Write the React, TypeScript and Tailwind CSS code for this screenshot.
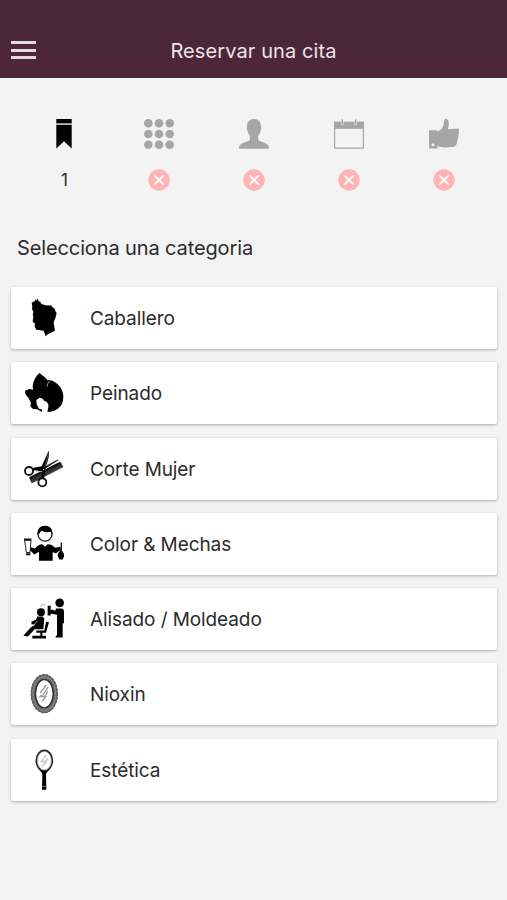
import { useState, type ReactNode } from 'react'

interface Category {
  id: string
  label: string
  viewBox: string
  icon: ReactNode
}

interface Step {
  id: string
  icon: ReactNode
}

const STEPS: Step[] = [
  {
    id: 'categoria',
    icon: (
      <g fill="#000">
        <path d="M7.3 0h15.4v4.4H7.3z" />
        <path d="M7.3 5.8h15.4v23.7L15 22.3l-7.7 7.2z" />
      </g>
    ),
  },
  {
    id: 'servicio',
    icon: (
      <g fill="#a6a6a6">
        {[4.3, 15, 25.7].map((y) => [4.3, 15, 25.7].map((x) => <circle key={`${x}-${y}`} cx={x} cy={y} r="4.3" />))}
      </g>
    ),
  },
  {
    id: 'profesional',
    icon: (
      <path
        fill="#a6a6a6"
        d="M15 0c4.4 0 7 2.8 7 7.4 0 1 .3 1.4.2 2.7-.2 1.5-.8 2-1.2 3.2-.5 1.8-1 2.7-1.9 3.7v3c0 1.4 1.4 2 4.4 3 4 1.3 6.500 2.700 6.500 6.700H0c0-4 2.500-5.400 6.500-6.700 3-1 4.400-1.600 4.400-3v-3C10 16 9.500 15.100 9 13.300c-.4-1.200-1-1.700-1.200-3.200-.1-1.300.2-1.700.2-2.700C8 2.800 10.600 0 15 0z"
      />
    ),
  },
  {
    id: 'fecha',
    icon: (
      <>
        <path d="M.6 9v20.200h28.800V9" fill="none" stroke="#a6a6a6" strokeWidth="1.200" />
        <path d="M0 2.600h30v7.200H0z" fill="#a6a6a6" />
        <path d="M8.300 2.500v2.500M21.700 2.500v2.500" stroke="#e6e6e6" strokeWidth="2.600" strokeLinecap="round" />
        <path d="M8.300.7v4M21.700.7v4" stroke="#a6a6a6" strokeWidth="1.400" strokeLinecap="round" />
      </>
    ),
  },
  {
    id: 'confirmar',
    icon: (
      <>
        <path
          fill="#a6a6a6"
          d="M0 11.300h7.700l1.300 1c3-1.500 5-3.500 5.500-6.300.3-2 .4-5.500 2-6 2-.5 3.500 2 3.300 5-.1 2-.6 3.500-.8 5.200l10.300-.6c1 0 1.200 1.200.6 3.400l-.7 5-.9 4-.9 3.400c-1 1.800-2.300 2.500-4.400 2.700-5 .6-9.500.5-14.500-.9v2.300H0z"
        />
        <circle cx="4" cy="25.700" r="1.500" fill="#f3f3f3" />
      </>
    ),
  },
]

const CATEGORIES: Category[] = [
  {
    id: 'caballero',
    label: 'Caballero',
    viewBox: '36 18 126 132',
    icon: (
      <path d="M82 25l5 10 4-1 1 6c8 5 16 7 24 6l5 1 3-3 1 6c6 3 12 7 11 14l4 5-4 16c-2 4-4 8-5 14l4 23-9 5-12 5-7 7-6-17-22-3-5-9 1-9-7-6 2-16-2-4 2-9-4-10 1-6-2-11 6-5 1 3 5-9 3 4z" />
    ),
  },
  {
    id: 'peinado',
    label: 'Peinado',
    viewBox: '36 19 126 132',
    icon: (
      <>
        <path d="M88 25c7 5 20 15 24 21 16-1 30 9 39 22 8 11 11 25 8 39-3 20-21 35-46 35-2-7 4-13 2-22-2-7-7-11-13-12l-4-6-9-3-10 7 1 12 7 14 10 3-2 7-13-8-13-1-8-8 2-10-7-14-10-13-1-10 14-5 10 2-1-12c2-16 10-29 20-38z" />
        <path d="M120 50l-6 5-3 11" fill="none" stroke="#bbb" strokeWidth="2.500" />
      </>
    ),
  },
  {
    id: 'corte-mujer',
    label: 'Corte Mujer',
    viewBox: '36 20 126 132',
    icon: (
      <>
        <path d="M57 112l95-47 8 14-95 50z" fill="#333" />
        <path d="M60 113l90-45" stroke="#111" strokeWidth="6" fill="none" />
        <path d="M68 125l90-46" stroke="#444" strokeWidth="5" strokeDasharray="3 1.500" fill="none" />
        <path d="M76 93l66-36 5 3-54 34z" fill="#222" stroke="#fff" strokeWidth="2" />
        <path d="M116 31c3 12-2 31-9 49l-5 34-9 1 4-24-29-1-2-7 29-5z" />
        <path d="M115 38l-9 38" stroke="#888" strokeWidth="2" />
        <circle cx="57" cy="92" r="12" fill="#fff" stroke="#111" strokeWidth="5.500" />
        <circle cx="97" cy="126" r="12" fill="#fff" stroke="#111" strokeWidth="5.500" />
        <circle cx="101" cy="88" r="2" fill="#fff" />
      </>
    ),
  },
  {
    id: 'color-mechas',
    label: 'Color & Mechas',
    viewBox: '36 20.5 126 132',
    icon: (
      <>
        <circle cx="105" cy="57" r="21" fill="#fff" stroke="#111" strokeWidth="4" />
        <path d="M83 57c-2-15 8-25 22-25s24 10 22 25l-5-7c-11 2-20 1-28-3-2 4-5 6-6 9z" />
        <path d="M58 95l17 5c6-8 13-13 22-13l8 8 8-8c9 0 16 3 22 11l16-3 2 8-15 11-10-3v26H87v-27l-14 8-16-16z" />
        <path d="M44 75h19l-3 37H49z" fill="#fff" stroke="#222" strokeWidth="3" />
        <path d="M42 73h22M48 117h13" stroke="#111" strokeWidth="6" />
        <path d="M154 82v24" stroke="#111" strokeWidth="4" />
        <path d="M153 102c5 7 10 13 10 20l-5 11h-10l-5-11c0-7 5-13 10-20z" />
      </>
    ),
  },
  {
    id: 'alisado-moldeado',
    label: 'Alisado / Moldeado',
    viewBox: '36 21.5 126 132',
    icon: (
      <>
        <circle cx="149" cy="39" r="13" />
        <path d="M138 56h16c5 0 8 4 8 9v35h-4v43h-21v-4l4-3V75l-22-4-1-8 18-1z" />
        <path d="M113 48h9v29h-9zM119 60h12v8h-12z" />
        <path d="M91 51c2-7 9-9 15-4" stroke="#777" strokeWidth="2" fill="none" />
        <circle cx="93" cy="67" r="12" />
        <path d="M82 80h16l5 6-3 32H74l-20 22-14-2 22-25 15-9-12-1-1-7 14-6z" />
        <path d="M83 93l-9 9" stroke="#fff" strokeWidth="2" />
        <path d="M108 96l-5 26H79v7h12v9H67v8h41v-8h-11v-9h11l9-32z" />
      </>
    ),
  },
  {
    id: 'nioxin',
    label: 'Nioxin',
    viewBox: '36 22 126 132',
    icon: (
      <>
        <ellipse cx="103" cy="87" rx="34" ry="52" fill="#fff" stroke="#707070" strokeWidth="13" />
        <ellipse cx="103" cy="87" rx="39" ry="57" fill="none" stroke="#555" strokeWidth="4" strokeDasharray="7 4" />
        <ellipse cx="103" cy="87" rx="34" ry="51" fill="none" stroke="#999" strokeWidth="3" strokeDasharray="4 4" />
        <ellipse cx="103" cy="87" rx="27" ry="43" fill="#fff" stroke="#333" strokeWidth="5" />
        <path d="M109 60L91 85M115 66l-19 30h11l-11 15M94 91l-6 8M113 79l-9 21" stroke="#999" strokeWidth="4" fill="none" />
      </>
    ),
  },
  {
    id: 'estetica',
    label: 'Estética',
    viewBox: '36 38 126 132',
    icon: (
      <>
        <ellipse cx="103" cy="76" rx="24" ry="31" fill="#fff" stroke="#222" strokeWidth="5" />
        <ellipse cx="103" cy="76" rx="21" ry="28" fill="none" stroke="#888" strokeWidth="2" />
        <path d="M109 58L94 78h13l-11 17M113 67l-7 18" stroke="#d0d0d0" strokeWidth="5" fill="none" />
        <path d="M88 102c8 6 22 6 30 0-2 6-9 8-10 15l1 46H96l1-46c-1-7-7-9-9-15z" />
        <path d="M96 153h13" stroke="#aaa" strokeWidth="2" />
      </>
    ),
  },
]

function PendingBadge() {
  return (
    <svg width="22" height="22" viewBox="0 0 22 22">
      <circle cx="11" cy="11" r="10.7" fill="#ffb3b3" />
      <path d="M7 7l8 8M15 7l-8 8" stroke="#fff5f5" strokeWidth="2.1" strokeLinecap="round" />
    </svg>
  )
}

function Header() {
  return (
    <header className="relative flex h-[77.5px] items-end justify-center bg-[#4b2737] pb-[13px]">
      <button type="button" aria-label="Menú" className="absolute left-[11px] top-[41px] flex flex-col gap-[4.5px]">
        <span className="h-[3px] w-[25px] bg-[#e5d9e0]" />
        <span className="h-[3px] w-[25px] bg-[#e5d9e0]" />
        <span className="h-[3px] w-[25px] bg-[#e5d9e0]" />
      </button>
      <h1 className="text-[20px] leading-7 tracking-[0.1px] text-[#eee3ea]">Reservar una cita</h1>
    </header>
  )
}

export default function App() {
  const [current, setCurrent] = useState(0)

  return (
    <div className="min-h-screen bg-[#f3f3f3] font-['Inter',sans-serif] text-[#2b2b2b]">
      <Header />

      <nav className="grid grid-cols-5 pl-[17px] pr-4 pt-[41.5px]">
        {STEPS.map((step, i) => (
          <button key={step.id} type="button" onClick={() => setCurrent(i)} className="flex flex-col items-center">
            <svg width="30" height="30" viewBox="0 0 30 30">
              {step.icon}
            </svg>
            <span className="mt-[19.5px] flex h-[22px] items-center text-[17px]">
              {i === current ? <span className="pt-0.5">{i + 1}</span> : <PendingBadge />}
            </span>
          </button>
        ))}
      </nav>

      <h2 className="mt-[43px] pl-[17px] text-[20px] leading-7 tracking-[-0.12px]">Selecciona una categoria</h2>

      <ul className="mt-[25.5px] flex flex-col gap-[13.25px] pl-[11px] pr-[10px]">
        {CATEGORIES.map((cat) => (
          <li key={cat.id}>
            <button
              type="button"
              className="flex h-[62px] w-full items-center rounded-xs bg-white pl-[11px] text-left shadow-[0_1px_3px_rgba(0,0,0,0.3)]"
            >
              <svg width="42" height="44" viewBox={cat.viewBox}>
                {cat.icon}
              </svg>
              <span className="ml-[26px] pt-0.5 text-[19px] leading-7 tracking-[-0.09px]">{cat.label}</span>
            </button>
          </li>
        ))}
      </ul>
    </div>
  )
}
